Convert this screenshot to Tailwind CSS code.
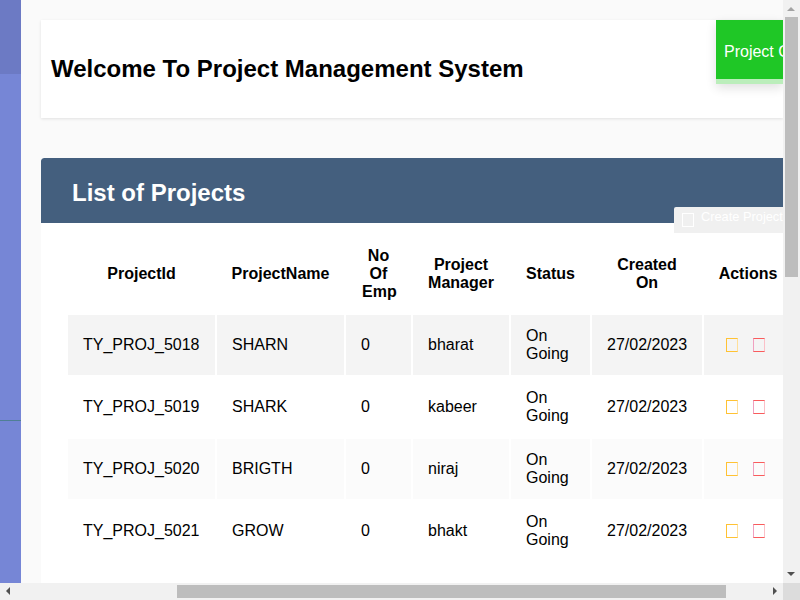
<!DOCTYPE html>
<html lang="en">
<head>
    <meta charset="UTF-8">
    <title>Project Management System</title>
    <script src="https://cdn.jsdelivr.net/npm/@tailwindcss/browser@4"></script>
</head>
<body class="w-[800px] h-[600px] overflow-hidden relative bg-[#fafafa] font-['Liberation_Sans',Arial,sans-serif] text-black">
    <div class="flex w-[783px] h-[583px] overflow-hidden">
        <!-- sidebar -->
        <div class="w-[21px] shrink-0 flex flex-col bg-[#7686d6]">
            <div class="h-[74px] bg-[#6c7ac4]"></div>
            <div class="h-px mt-[346px] bg-[#4f7f95]"></div>
        </div>

        <!-- content -->
        <div class="w-[762px] shrink-0 pl-5 pt-5">
            <div class="h-[98px] bg-white shadow-[0_1px_3px_rgba(0,0,0,0.1)] flex justify-between items-start">
                <h1 class="pl-2.5 mt-[34px] text-2xl leading-[30px] font-bold">Welcome To Project Management System</h1>
                <div class="w-[67px] h-[64px] overflow-hidden bg-[#bbeebb] shadow-[0_4px_10px_rgba(0,0,0,0.12)]">
                    <div class="h-[59px] bg-[#1fc726] pl-2 text-white text-base leading-[63px] whitespace-nowrap">Project Created</div>
                </div>
            </div>

            <div class="mt-10 bg-white rounded-tl-[3px] h-[500px] overflow-hidden">
                <div class="h-[65px] bg-[#445f7e] pl-[31px] text-white text-2xl leading-[70px] font-bold rounded-tl-[3px]">List of Projects</div>
                <table class="mt-2 ml-[25px] border-separate border-spacing-[2px] table-fixed w-[728px] text-base leading-[18px]">
                    <thead>
                        <tr class="h-[80px] font-bold text-center">
                            <th class="w-[147px] pt-0.5">ProjectId</th>
                            <th class="w-[127px] pt-0.5">ProjectName</th>
                            <th class="w-[65px] px-4 pt-0.5">No Of Emp</th>
                            <th class="w-[96px] px-3 pt-0.5">Project Manager</th>
                            <th class="w-[79px] pt-0.5">Status</th>
                            <th class="w-[110px] px-6 pt-0.5">Created On</th>
                            <th class="w-[88px] pt-0.5">Actions</th>
                        </tr>
                    </thead>
                    <tbody>
                        <tr class="h-[60px] bg-[#f4f4f4]">
                            <td class="pl-[15px]">TY_PROJ_5018</td><td class="pl-[15px]">SHARN</td><td class="pl-[15px]">0</td><td class="pl-[15px]">bharat</td><td class="pl-[15px] pr-5">On Going</td><td class="pl-[15px]">27/02/2023</td>
                            <td><div class="flex gap-[15px] pl-[22px]"><span class="w-3 h-3.5 border border-[#ffc233] border-r-[#ffdf99]"></span><span class="w-3 h-3.5 border border-[#f95c5c] border-l-[#f0a0c0] border-r-[#fbc0c8]"></span></div></td>
                        </tr>
                        <tr class="h-[60px] bg-white">
                            <td class="pl-[15px]">TY_PROJ_5019</td><td class="pl-[15px]">SHARK</td><td class="pl-[15px]">0</td><td class="pl-[15px]">kabeer</td><td class="pl-[15px] pr-5">On Going</td><td class="pl-[15px]">27/02/2023</td>
                            <td><div class="flex gap-[15px] pl-[22px]"><span class="w-3 h-3.5 border border-[#ffc233] border-r-[#ffdf99]"></span><span class="w-3 h-3.5 border border-[#f95c5c] border-l-[#f0a0c0] border-r-[#fbc0c8]"></span></div></td>
                        </tr>
                        <tr class="h-[60px] bg-[#fbfbfb]">
                            <td class="pl-[15px]">TY_PROJ_5020</td><td class="pl-[15px]">BRIGTH</td><td class="pl-[15px]">0</td><td class="pl-[15px]">niraj</td><td class="pl-[15px] pr-5">On Going</td><td class="pl-[15px]">27/02/2023</td>
                            <td><div class="flex gap-[15px] pl-[22px]"><span class="w-3 h-3.5 border border-[#ffc233] border-r-[#ffdf99]"></span><span class="w-3 h-3.5 border border-[#f95c5c] border-l-[#f0a0c0] border-r-[#fbc0c8]"></span></div></td>
                        </tr>
                        <tr class="h-[60px] bg-white">
                            <td class="pl-[15px]">TY_PROJ_5021</td><td class="pl-[15px]">GROW</td><td class="pl-[15px]">0</td><td class="pl-[15px]">bhakt</td><td class="pl-[15px] pr-5">On Going</td><td class="pl-[15px]">27/02/2023</td>
                            <td><div class="flex gap-[15px] pl-[22px]"><span class="w-3 h-3.5 border border-[#ffc233] border-r-[#ffdf99]"></span><span class="w-3 h-3.5 border border-[#f95c5c] border-l-[#f0a0c0] border-r-[#fbc0c8]"></span></div></td>
                        </tr>
                    </tbody>
                </table>
            </div>
        </div>
    </div>

    <!-- faded create button over the header edge -->
    <div class="absolute left-[674px] top-[207px] w-[109px] h-[26px] overflow-hidden bg-[#f0f0f0] rounded-tl-[2px] flex items-start pl-2 gap-[7px] text-white text-[12.8px] leading-[20px] whitespace-nowrap">
        <span class="w-3 h-3.5 mt-1.5 shrink-0 border border-white"></span>
        <span>Create Project</span>
    </div>

    <!-- vertical scrollbar -->
    <div class="absolute left-[783px] top-0 w-[17px] h-[583px] bg-[#f1f1f1]">
        <div class="absolute left-[4px] top-[7px] w-0 h-0 border-x-[4px] border-x-transparent border-b-[4px] border-b-[#a3a3a3]"></div>
        <div class="absolute left-[2px] top-[17px] w-[13px] h-[260px] bg-[#bdbdbd]"></div>
        <div class="absolute left-[4px] top-[572px] w-0 h-0 border-x-[4px] border-x-transparent border-t-[4px] border-t-[#505050]"></div>
    </div>

    <!-- horizontal scrollbar -->
    <div class="absolute left-0 top-[583px] w-[783px] h-[17px] bg-[#f1f1f1]">
        <div class="absolute left-[6px] top-[4px] w-0 h-0 border-y-[4px] border-y-transparent border-r-[4px] border-r-[#505050]"></div>
        <div class="absolute left-[177px] top-[2px] w-[549px] h-[13px] bg-[#bdbdbd]"></div>
        <div class="absolute left-[773px] top-[4px] w-0 h-0 border-y-[4px] border-y-transparent border-l-[4px] border-l-[#505050]"></div>
    </div>
    <div class="absolute left-[783px] top-[583px] w-[17px] h-[17px] bg-[#dcdcdc]"></div>
</body>
</html>
